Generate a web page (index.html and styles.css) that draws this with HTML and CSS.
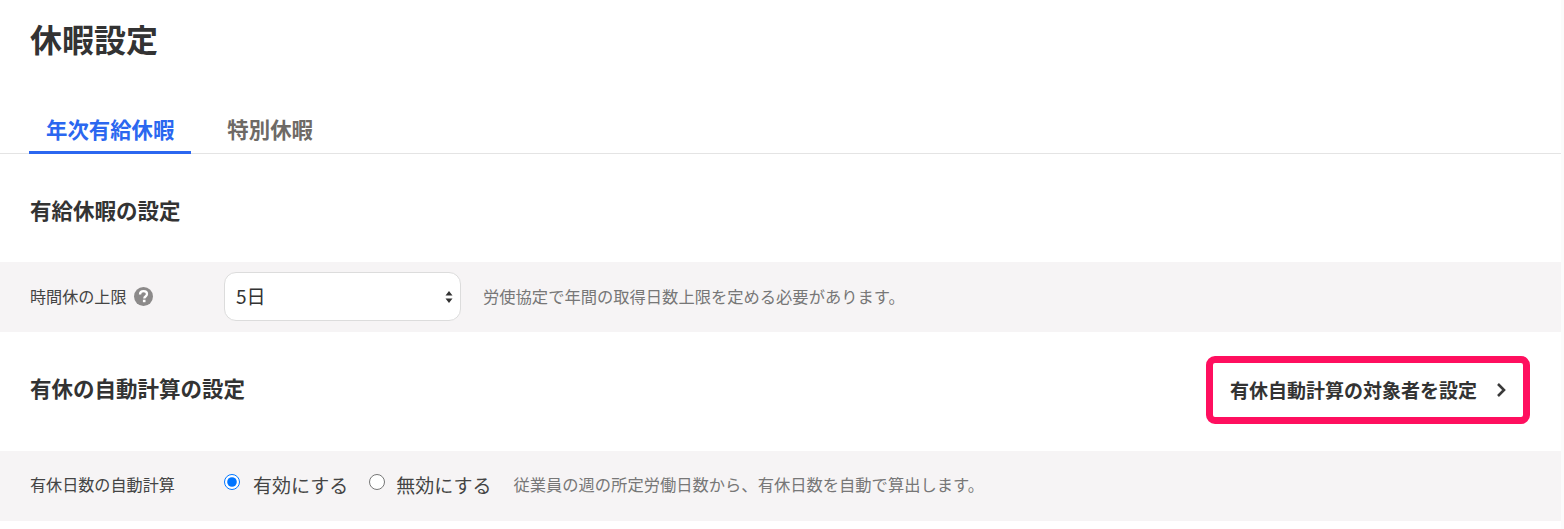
FILE: index.html
```html
<!DOCTYPE html>
<html lang="ja">
<head>
    <meta charset="UTF-8">
    <title>休暇設定</title>
    <link rel="stylesheet" href="styles.css">
</head>
<body>
    <div class="page">
        <h1 class="page-title">休暇設定</h1>

        <div class="tabs">
            <a class="tab tab-active">年次有給休暇</a>
            <a class="tab">特別休暇</a>
        </div>

        <div class="section-head section-head-first">
            <h2>有給休暇の設定</h2>
        </div>

        <div class="setting-row">
            <div class="setting-label">
                時間休の上限
                <svg class="help-icon" width="19" height="19" viewBox="0 0 19 19">
                    <circle cx="9.5" cy="9.5" r="9.500" fill="#8c8a8a"/>
                    <path d="M6 7.400c0-2.100 1.500-3.300 3.600-3.300 2 0 3.400 1.100 3.400 2.900 0 2.500-2.700 2.400-2.700 4.400" fill="none" stroke="#fff" stroke-width="2.300"/>
                    <rect x="8.900" y="12.700" width="2.600" height="2.500" fill="#fff"/>
                </svg>
            </div>
            <div class="select-wrap">
                <select class="select">
                    <option>5日</option>
                </select>
                <svg class="select-arrows" width="8" height="14" viewBox="0 0 8 14">
                    <path d="M4 1 7.500 5.500H.5zM4 13 .5 8.500H7.500z" fill="#333"/>
                </svg>
            </div>
            <span class="hint">労使協定で年間の取得日数上限を定める必要があります。</span>
        </div>

        <div class="section-head section-head-split">
            <h2>有休の自動計算の設定</h2>
            <a class="target-link">
                有休自動計算の対象者を設定
                <svg width="10" height="16" viewBox="0 0 10 16">
                    <path d="M2 2l6 6-6 6" fill="none" stroke="#3a3a3a" stroke-width="2.600"/>
                </svg>
            </a>
        </div>

        <div class="setting-row setting-row-radio">
            <div class="setting-label">有休日数の自動計算</div>
            <label class="radio"><input type="radio" name="auto" checked> 有効にする</label>
            <label class="radio radio-off"><input type="radio" name="auto"> 無効にする</label>
            <span class="hint hint-radio">従業員の週の所定労働日数から、有休日数を自動で算出します。</span>
        </div>
    </div>
</body>
</html>
```

FILE: styles.css
```css
* {
    box-sizing: border-box;
}
body {
    margin: 0;
    background: #fbfbfb;
    color: #333;
    font-family: "Noto Sans CJK JP", "Noto Sans", sans-serif;
}
.page {
    width: 1561px;
    height: 529px;
    overflow: hidden;
    background: #fff;
}
.page-title {
    margin: 0;
    height: 104px;
    padding: 14px 0 0 30px;
    font-size: 32px;
    line-height: 48px;
    font-weight: 700;
}
.tabs {
    display: flex;
    height: 50px;
    padding-left: 29px;
    border-bottom: 1px solid #e4e4e4;
}
.tab {
    height: 50px;
    padding: 8px 17px 0 17px;
    margin-right: 19px;
    font-size: 21.400px;
    line-height: 34px;
    font-weight: 700;
    color: #6e6a66;
}
.tab-active {
    color: #2b67f0;
    border-bottom: 3px solid #2b67f0;
}
.section-head {
    display: flex;
    align-items: center;
    height: 108px;
    padding: 0 30px;
}
.section-head h2 {
    margin: 0;
    font-size: 21.500px;
    line-height: 32px;
    font-weight: 700;
}
.section-head-first {
    padding-top: 4px;
}
.section-head-split {
    justify-content: space-between;
    height: 119px;
    padding-bottom: 4px;
}
.section-head-split h2 {
    margin-bottom: 4px;
}
.target-link {
    display: flex;
    align-items: center;
    justify-content: space-between;
    width: 324px;
    height: 68px;
    margin: 0 1px 0 0;
    padding: 0 17px;
    border: 7px solid #ff0f5f;
    border-radius: 9px;
    font-size: 19px;
    font-weight: 700;
}
.setting-row {
    display: flex;
    align-items: center;
    height: 70px;
    padding-left: 30px;
    padding-bottom: 2px;
    background: #f6f4f5;
}
.setting-row-radio {
    padding-bottom: 4px;
}
.setting-label {
    display: flex;
    align-items: center;
    gap: 7px;
    width: 194px;
    font-size: 16.100px;
    color: #444;
}
.select-wrap {
    position: relative;
    width: 237px;
    height: 49px;
}
.select {
    width: 100%;
    height: 100%;
    padding: 0 11px 2px;
    appearance: none;
    background: #fff;
    border: 1px solid #dcdcdc;
    border-radius: 12px;
    font-family: inherit;
    font-size: 19px;
    color: #333;
}
.select-arrows {
    position: absolute;
    right: 8px;
    top: 18px;
}
.hint {
    margin-left: 22px;
    font-size: 16.300px;
    color: #777;
}
.radio {
    display: flex;
    align-items: center;
    gap: 13px;
    margin-right: 21px;
    font-size: 19px;
    color: #444;
}
.radio-off {
    gap: 11px;
    margin-right: 22px;
}
.radio input {
    width: 16px;
    height: 16px;
    margin: 0 0 4px;
    accent-color: #0075ff;
}
.hint-radio {
    margin-left: 0;
}
```
